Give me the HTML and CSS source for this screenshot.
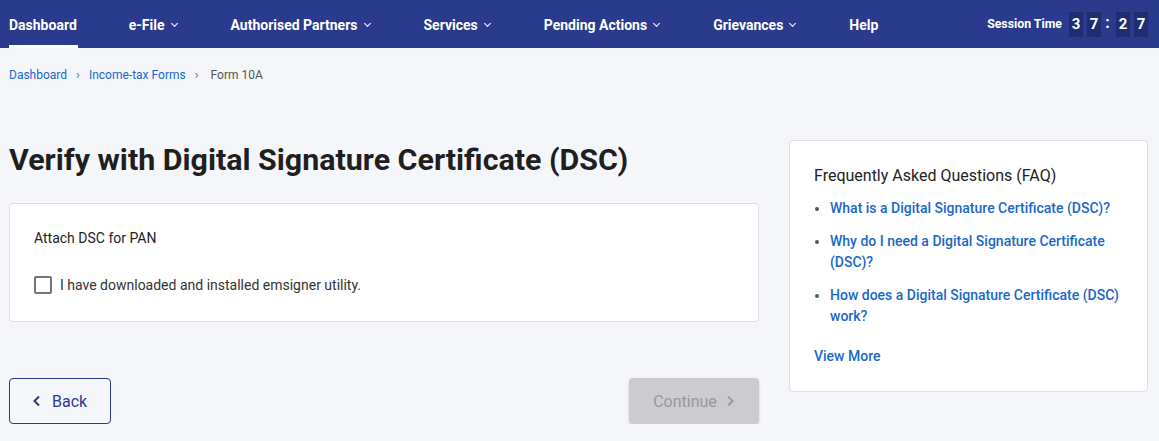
FILE: index.html
```html
<!DOCTYPE html>
<html lang="en">
<head>
    <meta charset="UTF-8">
    <meta name="viewport" content="width=device-width, initial-scale=1.0">
    <title>Form 10A - Verify with DSC</title>
    <link rel="stylesheet" href="styles.css">
</head>
<body>

<nav class="topnav">
    <ul class="nav-menu">
        <li class="nav-item active">Dashboard</li>
        <li class="nav-item">e-File <span class="caret"></span></li>
        <li class="nav-item">Authorised Partners <span class="caret"></span></li>
        <li class="nav-item">Services <span class="caret"></span></li>
        <li class="nav-item">Pending Actions <span class="caret"></span></li>
        <li class="nav-item">Grievances <span class="caret"></span></li>
        <li class="nav-item">Help</li>
    </ul>
    <div class="session">
        <span class="session-label">Session Time</span>
        <span class="digit">3</span>
        <span class="digit">7</span>
        <span class="colon">:</span>
        <span class="digit">2</span>
        <span class="digit">7</span>
    </div>
</nav>

<div class="breadcrumb">
    <a href="#">Dashboard</a>
    <span class="sep">&rsaquo;</span>
    <a href="#">Income-tax Forms</a>
    <span class="sep">&rsaquo;</span>
    <span class="current">Form 10A</span>
</div>

<div class="page">
    <div class="main-col">
        <h1>Verify with Digital Signature Certificate (DSC)</h1>
        <div class="card">
            <p class="card-label">Attach DSC for PAN</p>
            <label class="check">
                <input type="checkbox">
                <span class="box"></span>
                I have downloaded and installed emsigner utility.
            </label>
        </div>
        <div class="actions">
            <button class="btn-back">
                <svg width="10" height="12" viewBox="0 0 10 12"><path d="M7 1.5L2.5 6L7 10.5" fill="none" stroke="#2a3a8c" stroke-width="2"/></svg>
                Back
            </button>
            <button class="btn-continue" disabled>
                Continue
                <svg width="10" height="12" viewBox="0 0 10 12"><path d="M3 1.5L7.5 6L3 10.5" fill="none" stroke="#9a9aa0" stroke-width="2"/></svg>
            </button>
        </div>
    </div>

    <aside class="faq">
        <h3>Frequently Asked Questions (FAQ)</h3>
        <ul>
            <li><a href="#">What is a Digital Signature Certificate (DSC)?</a></li>
            <li><a href="#">Why do I need a Digital Signature Certificate (DSC)?</a></li>
            <li><a href="#">How does a Digital Signature Certificate (DSC) work?</a></li>
        </ul>
        <a href="#" class="view-more">View More</a>
    </aside>
</div>

</body>
</html>
```

FILE: styles.css
```css
body {
    margin: 0;
    font-family: Roboto, "Liberation Sans", Arial, sans-serif;
    background-color: #f4f6fa;
    color: #1f1f1f;
}

.topnav {
    background-color: #2a3a8c;
    height: 48px;
    display: flex;
    align-items: center;
    justify-content: space-between;
    padding: 0 11px 0 9px;
}

.nav-menu {
    list-style: none;
    margin: 0;
    padding: 0;
    display: flex;
    height: 48px;
    gap: 54px;
}

.nav-item {
    color: #fff;
    font-weight: bold;
    font-size: 14px;
    display: flex;
    align-items: center;
    height: 48px;
    box-sizing: border-box;
    padding-top: 1px;
}

.nav-item.active {
    border-bottom: 3px solid #fff;
    padding-top: 4px;
    padding-right: 1px;
    margin-right: -3px;
}

.caret {
    display: inline-block;
    width: 4px;
    height: 4px;
    border-right: 1.5px solid #fff;
    border-bottom: 1.5px solid #fff;
    transform: rotate(45deg);
    margin: -3px 0 0 7px;
}

.session {
    display: flex;
    align-items: center;
    color: #fff;
    font-weight: bold;
}

.session-label {
    font-size: 12.3px;
    margin-right: 3px;
}

.digit {
    background-color: #1f2d72;
    width: 14px;
    height: 25px;
    line-height: 25px;
    text-align: center;
    font-size: 15px;
    margin-left: 4px;
}

.colon {
    font-size: 16px;
    width: 9px;
    text-align: center;
    margin-left: 2px;
    position: relative;
    top: -2px;
}

.breadcrumb {
    padding: 19px 0 0 9px;
    font-size: 12px;
    height: 18px;
}

.breadcrumb a {
    color: #1a68c9;
    text-decoration: none;
}

.breadcrumb .sep {
    color: #777;
    margin: 0 6px;
    font-size: 13px;
}

.breadcrumb .current {
    color: #555;
    margin-left: 3px;
}

.page {
    display: flex;
    gap: 30px;
    padding: 0 11px 0 9px;
    margin-top: 55px;
}

.main-col {
    width: 750px;
}

h1 {
    font-size: 30.4px;
    font-weight: bold;
    margin: 2px 0 25px 0;
    line-height: 36px;
    color: #1f1f1f;
}

.card {
    background-color: #fff;
    border: 1px solid #dcdde6;
    border-radius: 4px;
    padding: 26px 24px 27px 24px;
}

.card-label {
    margin: 0 0 30px 0;
    font-size: 14px;
    color: #222;
}

.check {
    display: flex;
    align-items: center;
    font-size: 14px;
    color: #333;
}

.check input {
    display: none;
}

.check .box {
    width: 14px;
    height: 14px;
    border: 2px solid #757575;
    border-radius: 2px;
    margin-right: 8px;
}

.actions {
    display: flex;
    justify-content: space-between;
    margin-top: 56px;
}

.btn-back {
    width: 102px;
    height: 46px;
    border: 1px solid #2a3a8c;
    border-radius: 4px;
    color: #2a3a8c;
    font-family: inherit;
    font-size: 16px;
    display: flex;
    align-items: center;
    padding-left: 22px;
    gap: 10px;
    background-color: transparent;
}

.btn-continue {
    width: 130px;
    height: 46px;
    background-color: #cbcbd0;
    border: none;
    border-radius: 4px;
    color: #999;
    font-family: inherit;
    font-size: 16px;
    display: flex;
    align-items: center;
    justify-content: center;
    gap: 8px;
    box-shadow: 0 1px 3px rgba(0, 0, 0, 0.15);
}

.faq {
    width: 359px;
    box-sizing: border-box;
    background-color: #fff;
    border: 1px solid #dcdde6;
    border-radius: 4px;
    padding: 25px 24px 25px 24px;
    height: 252px;
}

.faq h3 {
    font-size: 16px;
    font-weight: normal;
    margin: 0 0 13px 0;
    color: #222;
}

.faq ul {
    margin: 0;
    padding-left: 16px;
    color: #555;
}

.faq li {
    font-size: 14px;
    line-height: 21px;
    margin-bottom: 12px;
}

.faq a {
    color: #1a68c9;
    text-decoration: none;
    font-weight: 500;
}

.view-more {
    display: block;
    font-size: 14px;
    margin-top: 21px;
}
```
